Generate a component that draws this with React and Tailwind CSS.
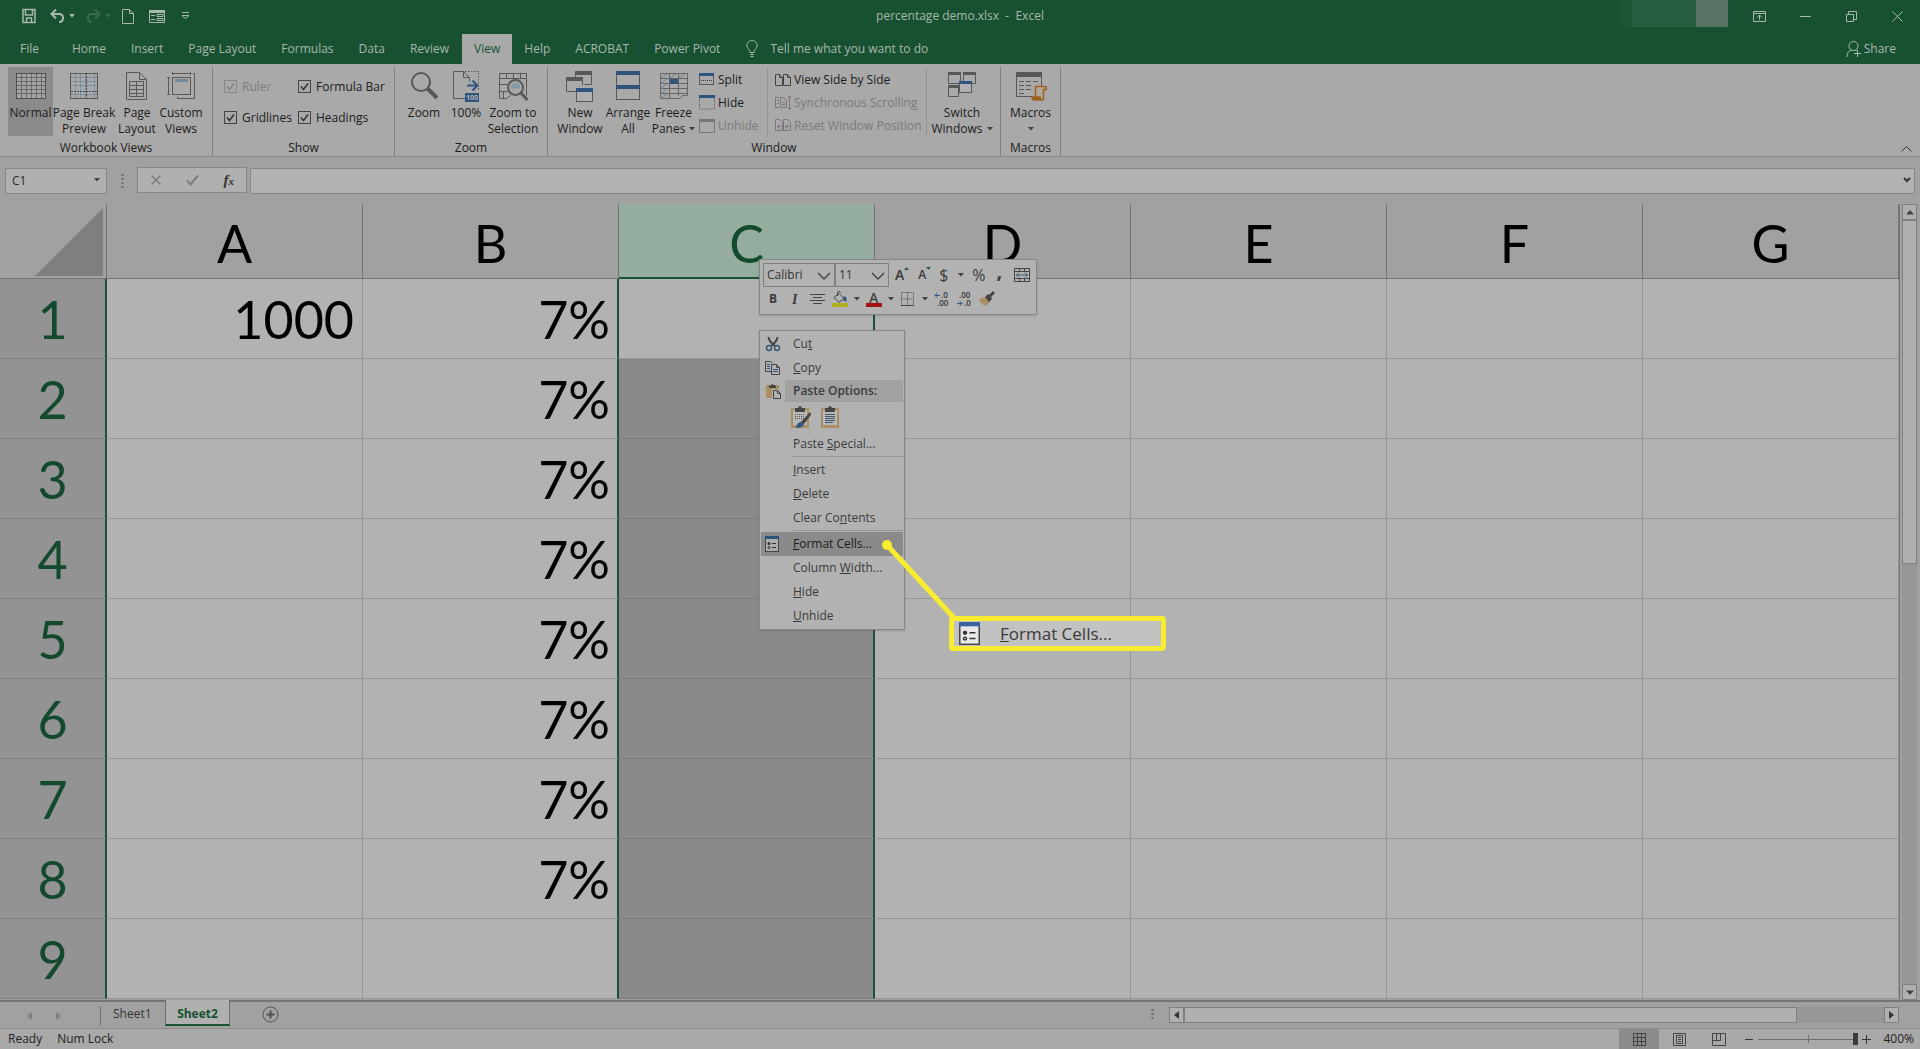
// src/App.jsx

import React from 'react';

const COLUMNS = ['A', 'B', 'C', 'D', 'E', 'F', 'G'];

const ROWS = [
  { A: '1000', B: '7%' },
  { B: '7%' },
  { B: '7%' },
  { B: '7%' },
  { B: '7%' },
  { B: '7%' },
  { B: '7%' },
  { B: '7%' },
  {},
];

const TABS = ['Home', 'Insert', 'Page Layout', 'Formulas', 'Data', 'Review', 'View', 'Help', 'ACROBAT', 'Power Pivot'];

const G = '#585858';
const BLUE = '#2f557f';

function Svg({ w, h, className = '', children }) {
  return (
    <svg width={w} height={h} viewBox={`0 0 ${w} ${h}`} fill="none" className={`shrink-0 overflow-visible ${className}`} aria-hidden="true">
      {children}
    </svg>
  );
}

function Caret({ className = 'text-[#404040]' }) {
  return (
    <Svg w={6} h={4} className={className}>
      <path d="M0 0h6L3 3.5z" fill="currentColor" />
    </Svg>
  );
}

/* ---------- Ribbon icons ---------- */

const NormalIcon = () => (
  <Svg w={32} h={32}>
    <rect x="1.5" y="3.5" width="29" height="25" fill="#a4a4a4" />
    <path d="M2 7.5h28M2 11.5h28M2 15.5h28M2 19.5h28M2 23.5h28M6.5 4v24M11.5 4v24M16.5 4v24M21.5 4v24M26.5 4v24" stroke="#686868" />
    <rect x="1.5" y="3.5" width="29" height="25" stroke="#505050" />
  </Svg>
);

const PageBreakIcon = () => (
  <Svg w={32} h={32}>
    <path d="M3 7.5h27M3 11.5h27M3 15.5h27M3 24.5h27M7.5 3v25M12.5 3v25M17.5 3v25M26.5 3v25" stroke="#7b909c" />
    <rect x="2.5" y="3.5" width="27" height="25" stroke={G} />
    <path d="M3 21.5h27M18.5 3v25" stroke="#3d4b56" strokeDasharray="2 1" />
  </Svg>
);

const PageLayoutIcon = () => (
  <Svg w={32} h={32}>
    <path d="M5.5 2.5h13l7 7v20h-20z" stroke={G} />
    <path d="M18.5 2.5v7h7" stroke={G} />
    <path d="M8.5 11.5h14v15h-14zM8.5 15.5h14M8.5 19.5h14M8.5 23.5h14M15.5 11.5v15" stroke={G} />
  </Svg>
);

const CustomViewsIcon = () => (
  <Svg w={32} h={32}>
    <rect x="7.5" y="7.5" width="18" height="17" stroke={G} />
    <rect x="10" y="9" width="13" height="3" fill="#71879a" />
    <path d="M7 3.5h19M7.5 2v3M25.5 2v3M3.500 7v18M2 7.5h3M2 24.5h3M28 3.5h1.500v25h-17v-2" stroke={G} />
  </Svg>
);

const ZoomIcon = () => (
  <Svg w={32} h={32}>
    <circle cx="13" cy="12" r="9" stroke={G} strokeWidth="2" />
    <path d="M19.500 18.500L29 28" stroke={G} strokeWidth="4" />
  </Svg>
);

const HundredIcon = () => (
  <Svg w={32} h={32}>
    <path d="M15 28.500H3.500v-27h10l6 6v4" stroke={G} />
    <path d="M13.500 1.500v6h6" stroke={G} />
    <path d="M15 1.500h13.500v19" stroke={G} strokeDasharray="1.500 1.500" />
    <path d="M17 15.500h10M22.500 10.500l5 5-5 5" stroke={BLUE} strokeWidth="2" />
    <rect x="15" y="23" width="14" height="9" fill={BLUE} />
    <text x="16" y="30" fontSize="7" fontWeight="700" fill="#b2b2b2" fontFamily="Open Sans, sans-serif">100</text>
  </Svg>
);

const ZoomSelectionIcon = () => (
  <Svg w={32} h={32}>
    <path d="M2.500 28V3.500h27v22M2.500 8.500h27M2.500 14.500h9M2.500 21.500h8M9.500 3.500v5M16.500 3.500v5M23.500 3.500v5M6.500 22v6M2.500 28.500h7l4-3" stroke={G} />
    <circle cx="18.500" cy="17.500" r="7.500" fill="#a9a9a9" stroke={G} strokeWidth="2" />
    <path d="M14 15.500a5 5 0 0 1 9 0v3h-9z" fill="#8299a8" />
    <path d="M24 23l6.500 7" stroke={G} strokeWidth="3" />
  </Svg>
);

const NewWindowIcon = () => (
  <Svg w={32} h={32}>
    <path d="M11.500 7V1.500h16v13h-7" stroke={G} />
    <rect x="11" y="1" width="17" height="4" fill={G} />
    <path d="M2.500 8.500h16v7M12 21.500H2.500v-13" stroke={G} />
    <rect x="2" y="7" width="17" height="4" fill={G} />
    <rect x="12.500" y="18.500" width="16" height="13" fill="#b0b0b0" stroke={G} />
    <rect x="12" y="18" width="17" height="4" fill={BLUE} />
  </Svg>
);

const ArrangeIcon = () => (
  <Svg w={32} h={32}>
    <rect x="4.500" y="2.500" width="23" height="27" stroke={G} />
    <rect x="4" y="1" width="24" height="4" fill={BLUE} />
    <rect x="4" y="15" width="24" height="4" fill={BLUE} />
  </Svg>
);

const FreezeIcon = () => (
  <Svg w={32} h={32}>
    <path d="M2.500 28V3.500h27v22h-5l-3 3h-19M2.500 8.500h27M2.500 13.500h27M2.500 18.500h27M2.500 23.500h27M11.500 3.500v25M20.500 3.500v22" stroke="#666" />
    <path d="M3 8l6-4M12 8l6-4M21 8l6-4M3 13l6-4M3 18l6-4M3 23l6-4M3 28l6-4" stroke="#6f8494" />
    <rect x="12" y="9" width="8" height="5" fill={BLUE} />
  </Svg>
);

const SwitchIcon = () => (
  <Svg w={32} h={32}>
    <path d="M2.500 2.500h12v11h-12zM17.500 2.500h12v11h-12zM2.500 15.500h10v11h-10z" stroke={G} />
    <path d="M2 2h13v3H2zM17 2h13v3H17zM2 15h11v3H2z" fill={G} />
    <rect x="13.500" y="11.500" width="12" height="11" fill="#b0b0b0" stroke={G} />
    <rect x="13" y="11" width="13" height="3" fill={BLUE} />
  </Svg>
);

const MacrosIcon = () => (
  <Svg w={32} h={32}>
    <path d="M17 26.500H1.500v-24h25v13" stroke={G} />
    <rect x="1" y="2" width="26" height="5" fill={G} />
    <path d="M4 11.500h5M11 11.500h5M18 11.500h5M4 15.500h5M11 15.500h5M4 19.500h5M11 19.500h5M4 23.500h5" stroke={G} />
    <path d="M20.500 27V16.500h9.500q1.500 0 1.500 3H28.500V28q0 2-2 2H19q-2 0-2-3h8q0 3 2 3" fill="#b0a898" stroke="#9a6020" strokeWidth="1.500" />
    <path d="M17 27h8v3h-7z" fill="#9a6020" />
  </Svg>
);

const SplitIcon = () => (
  <Svg w={16} h={13}>
    <rect x=".5" y=".5" width="14" height="11" stroke={G} />
    <rect width="15" height="3" fill={BLUE} />
    <path d="M2 7.500h12" stroke="#333" strokeDasharray="1 1" />
  </Svg>
);

const HideIcon = () => (
  <Svg w={16} h={15}>
    <path d="M.5 3v11h15V3" stroke={G} strokeDasharray="1 1" />
    <rect width="16" height="3" fill={BLUE} />
  </Svg>
);

const UnhideIcon = () => (
  <Svg w={16} h={14}>
    <rect x=".5" y=".5" width="15" height="13" stroke="#777" />
    <rect width="16" height="3" fill="#777" />
  </Svg>
);

const SideBySideIcon = () => (
  <Svg w={16} h={14}>
    <path d="M.5 1.500h4l3 3v8h-7zM8.500 1.500h4l3 3v8h-7zM4.500 1.500v3h3M12.500 1.500v3h3" stroke="#444" />
  </Svg>
);

const SyncIcon = () => (
  <Svg w={16} h={15}>
    <path d="M4 2.500H.5v10H4M5.500 2.500h3l3 3v7h-6zM2 5.500h2M2 8.500h2M7 7.500h3M7 9.500h3M14.500 1v13M13 2.500l1.500-2 1.500 2M13 12.500l1.500 2 1.500-2" stroke="#7d727d" />
  </Svg>
);

const ResetIcon = () => (
  <Svg w={16} h={13}>
    <path d="M.5.5h4l3 3v8h-7zM8.500.5h4l3 3v8h-7zM2 7.500h4M4 5.500v4M10 7.500h4M12 5.500v4" stroke="#7d727d" />
  </Svg>
);

/* ---------- Menu icons ---------- */

const CutIcon = () => (
  <Svg w={16} h={16}>
    <path d="M3.500 1q0 4 6.500 9M12.500 1q0 4-6.500 9" stroke="#444" strokeWidth="2" />
    <circle cx="4" cy="12" r="2.500" stroke="#3b5a6f" strokeWidth="1.500" />
    <circle cx="12" cy="12" r="2.500" stroke="#3b5a6f" strokeWidth="1.500" />
  </Svg>
);

const CopyIcon = () => (
  <Svg w={16} h={16}>
    <path d="M6 11.500H.5v-10h5l2 2" stroke="#444" />
    <path d="M2 4.500h3M2 6.500h3M2 8.500h3" stroke={BLUE} />
    <path d="M6.500 4.500h5l3 3v7h-8zM11.500 4.500v3h3" fill="#b2b2b2" stroke="#444" />
    <path d="M8 9.500h5M8 11.500h5" stroke={BLUE} />
  </Svg>
);

const PasteIcon = () => (
  <Svg w={16} h={16}>
    <path d="M1 2h13v4H7v9H1z" fill="#a98f62" />
    <path d="M4 2.500h2q1-3 3 0h2V5H4z" fill="#444" />
    <path d="M8.500 7.500h4l3 3v5h-7zM12.500 7.500v3h3" fill="#b2b2b2" stroke="#444" />
  </Svg>
);

function Clipboard({ brush }) {
  return (
    <Svg w={22} h={24}>
      <rect x="2" y="3" width="18" height="20" fill="#a98f62" />
      <rect x="4" y="5" width="14" height="15" fill="#b8b8b8" />
      <path d="M6 3h3q2-4 4 0h3v4H6z" fill="#444" />
      {brush ? (
        <>
          <path d="M6 9.500h10M6 11.500h10M6 13.500h9" stroke="#555" strokeDasharray="1 1" />
          <path d="M12 17l9-10q2 2 0 4l-6 8z" fill="#444" />
          <path d="M7 23q1-6 5-6l3 2q-1 4-8 4z" fill={BLUE} />
        </>
      ) : (
        <path d="M6 9.500h10M6 11.500h10M6 13.500h10M6 15.500h10M6 17.500h8" stroke="#3f5468" />
      )}
    </Svg>
  );
}

function FormatCellsIcon({ size = 16, light }) {
  return (
    <svg width={size - 2} height={size} viewBox="0 0 14 16" preserveAspectRatio="none" fill="none" aria-hidden="true">
      <rect x=".5" y=".5" width="13" height="15" fill={light ? '#e8e8e8' : '#adadad'} stroke="#454545" />
      <rect width="14" height="3" fill={light ? '#3a62a0' : BLUE} />
      <path d="M7 7.500h4M7 11.500h4" stroke="#333" />
      <circle cx="4" cy="7.500" r="1.500" fill="#333" />
      <circle cx="4" cy="11.500" r="1" stroke="#333" />
    </svg>
  );
}

/* ---------- Title bar and tabs ---------- */

function TitleBar() {
  return (
    <header className="relative flex h-8 items-center justify-center bg-[#175131] text-[#a9b8ae]">
      <div className="absolute left-[22px] top-2 flex h-4 items-center">
        <button aria-label="Save">
          <Svg w={14} h={16}>
            <path d="M1 1.500h12v13H1zM3.500 2v5h7V2M4.500 14v-4h5v4" stroke="currentColor" strokeWidth="1.500" />
          </Svg>
        </button>
        <button aria-label="Undo" className="ml-3.5 flex items-center gap-1">
          <Svg w={15} h={16}>
            <path d="M1 6h8q4 0 4 4t-4 4M6 1.500L1.500 6 6 10.500" stroke="currentColor" strokeWidth="2" />
          </Svg>
          <Caret className="text-[#a9b8ae]" />
        </button>
        <button aria-label="Redo" disabled className="ml-[11px] flex items-center gap-1 text-[#3c6a50]">
          <Svg w={15} h={16}>
            <path d="M14 6H6q-4 0-4 4t4 4M9 1.500L13.500 6 9 10.500" stroke="currentColor" strokeWidth="2" />
          </Svg>
          <Caret className="text-[#3c6a50]" />
        </button>
        <button aria-label="New" className="ml-[11px]">
          <Svg w={12} h={16}>
            <path d="M.5 1.500h7l4 4v10H.5zM7.500 1.500v4h4" stroke="currentColor" />
          </Svg>
        </button>
        <button aria-label="Form" className="ml-[15px]">
          <Svg w={16} h={16}>
            <path d="M.5 2.500h15v12H.5z" stroke="currentColor" />
            <path d="M0 2h16v3H0z" fill="currentColor" />
            <path d="M2 7.500h4M2 11.500h4M8 6.500h6v2H8zM8 10.500h6v2H8z" stroke="currentColor" />
          </Svg>
        </button>
        <button aria-label="Customize Quick Access Toolbar" className="ml-4">
          <Svg w={9} h={10}>
            <path d="M1 1.500h7M1 4.500h7l-3.500 3z" stroke="currentColor" />
          </Svg>
        </button>
      </div>
      <h1 className="whitespace-pre text-[12px] leading-4">percentage demo.xlsx  -  Excel</h1>
      <div className="absolute right-0 top-0 flex h-8">
        <div className="mr-2 flex h-[27px]">
          <div className="w-3 bg-[#1d5536]" />
          <div className="w-16 bg-[#265c3f]" />
          <div className="w-8 bg-[#587264]" />
        </div>
        <button aria-label="Ribbon Display Options" className="flex w-[46px] items-center justify-center">
          <Svg w={13} h={11}>
            <path d="M.5.5h12v10H.5zM.5 2.500h12M6.500 9V4M4 6.500L6.500 4 9 6.500" stroke="currentColor" />
          </Svg>
        </button>
        <button aria-label="Minimize" className="flex w-[46px] items-center justify-center">
          <Svg w={11} h={11}><path d="M0 5.500h11" stroke="currentColor" /></Svg>
        </button>
        <button aria-label="Restore" className="flex w-[46px] items-center justify-center">
          <Svg w={11} h={11}><path d="M.5 3.500h7v7h-7zM2.500 3V.5h8v8H8" stroke="currentColor" /></Svg>
        </button>
        <button aria-label="Close" className="flex w-[46px] items-center justify-center">
          <Svg w={11} h={11}><path d="M.5.5l10 10M10.500.5l-10 10" stroke="currentColor" /></Svg>
        </button>
      </div>
    </header>
  );
}

function TabBar() {
  return (
    <nav className="flex h-8 items-stretch bg-[#175131] pt-0.5 text-[12px] text-[#a9b8ae]">
      <button className="mr-2 pl-5 pr-[13px]">File</button>
      {TABS.map((tab) => (
        <button
          key={tab}
          className={tab === 'View' ? 'bg-[#a9a9a9] px-3 text-[#175131]' : 'pl-3 pr-[13px]'}
        >
          {tab}
        </button>
      ))}
      <button className="ml-[13px] flex items-center gap-3">
        <Svg w={12} h={18}>
          <path d="M4 12.500Q4 10 2 8.500A5 5 0 1 1 10 8.500Q8 10 8 12.500zM4 14.500h4M4.500 16.500h3" stroke="currentColor" />
        </Svg>
        Tell me what you want to do
      </button>
      <button className="ml-auto mr-6 flex items-center gap-[3px]">
        <Svg w={15} h={18}>
          <circle cx="7.500" cy="6" r="4.500" stroke="currentColor" />
          <path d="M1 17q0-6 4.500-7M9.500 10l1 1M8 13.500h7M11.500 10v7" stroke="currentColor" />
        </Svg>
        Share
      </button>
    </nav>
  );
}

/* ---------- Ribbon ---------- */

function BigButton({ icon, lines, caret, className = '' }) {
  return (
    <button className={`flex h-[69px] shrink-0 flex-col items-center pt-[3px] ${className}`}>
      {icon}
      {lines.map((line, i) => (
        <span key={line} className="flex items-center gap-1 whitespace-nowrap leading-4 first-of-type:mt-[3px]">
          {line}
          {caret && i === lines.length - 1 && line !== 'Macros' && <Caret />}
        </span>
      ))}
      {caret && lines.length === 1 && <Caret className="mt-1.5 text-[#404040]" />}
    </button>
  );
}

function SmallButton({ icon, label, disabled }) {
  return (
    <button disabled={disabled} className="flex h-[23px] shrink-0 items-center gap-[3px] whitespace-nowrap disabled:text-[#7a7a7a]">
      {icon}
      {label}
    </button>
  );
}

function Check({ label, disabled }) {
  return (
    <label className={`relative flex h-[31px] items-center gap-[5px] whitespace-nowrap ${disabled ? 'text-[#7d7d7d]' : ''}`}>
      <input
        type="checkbox"
        defaultChecked
        disabled={disabled}
        className="size-[13px] appearance-none border border-[#444] disabled:border-[#888]"
      />
      <Svg w={13} h={13} className="pointer-events-none absolute left-0">
        <path d="M3 6.500l2.500 3L10 3.500" stroke={disabled ? '#808080' : '#333'} strokeWidth="1.500" />
      </Svg>
      {label}
    </label>
  );
}

function Group({ name, className = '', children }) {
  return (
    <section className={`flex flex-col border-r border-[#808080] ${className}`}>
      <div className="flex h-[73px]">{children}</div>
      <h2 className="text-center leading-4">{name}</h2>
    </section>
  );
}

function Ribbon() {
  return (
    <div className="relative flex h-[93px] border-b border-[#8c8c8c] bg-[#a9a9a9] pt-[3px] text-[12px] text-[#1c1c1c]">
      <Group name="Workbook Views" className="w-[213px] px-2">
        <BigButton className="w-[45px] bg-[#8b8b8b]" icon={<NormalIcon />} lines={['Normal']} />
        <BigButton className="w-[62px]" icon={<PageBreakIcon />} lines={['Page Break', 'Preview']} />
        <BigButton className="w-11" icon={<PageLayoutIcon />} lines={['Page', 'Layout']} />
        <BigButton className="w-11" icon={<CustomViewsIcon />} lines={['Custom', 'Views']} />
      </Group>
      <Group name="Show" className="w-[182px]">
        <div className="grid grid-cols-[74px_auto] content-start pl-[11px] pt-1">
          <Check label="Ruler" disabled />
          <Check label="Formula Bar" />
          <Check label="Gridlines" />
          <Check label="Headings" />
        </div>
      </Group>
      <Group name="Zoom" className="w-[153px] px-1.5">
        <BigButton className="w-[46px]" icon={<ZoomIcon />} lines={['Zoom']} />
        <BigButton className="w-[38px]" icon={<HundredIcon />} lines={['100%']} />
        <BigButton className="w-14" icon={<ZoomSelectionIcon />} lines={['Zoom to', 'Selection']} />
      </Group>
      <Group name="Window" className="w-[453px] px-2">
        <BigButton className="w-12" icon={<NewWindowIcon />} lines={['New', 'Window']} />
        <BigButton className="w-12" icon={<ArrangeIcon />} lines={['Arrange', 'All']} />
        <BigButton className="w-[43px]" icon={<FreezeIcon />} lines={['Freeze', 'Panes']} caret />
        <div className="mt-px flex h-[69px] w-[73px] shrink-0 flex-col border-r border-[#949494] pl-1">
          <SmallButton icon={<SplitIcon />} label="Split" />
          <SmallButton icon={<HideIcon />} label="Hide" />
          <SmallButton icon={<UnhideIcon />} label="Unhide" disabled />
        </div>
        <div className="mt-px flex h-[69px] w-[159px] shrink-0 flex-col border-r border-[#949494] pl-[7px]">
          <SmallButton icon={<SideBySideIcon />} label="View Side by Side" />
          <SmallButton icon={<SyncIcon />} label="Synchronous Scrolling" disabled />
          <SmallButton icon={<ResetIcon />} label="Reset Window Position" disabled />
        </div>
        <BigButton className="w-[70px]" icon={<SwitchIcon />} lines={['Switch', 'Windows']} caret />
      </Group>
      <Group name="Macros" className="w-[60px]">
        <BigButton className="w-full" icon={<MacrosIcon />} lines={['Macros']} caret />
      </Group>
      <button aria-label="Collapse the Ribbon" className="mb-1 ml-auto mr-2 self-end">
        <Svg w={11} h={6}><path d="M.5 5.500l5-5 5 5" stroke="#333" /></Svg>
      </button>
    </div>
  );
}

function FormulaBar() {
  return (
    <div className="flex h-[47px] items-start bg-[#a1a1a1] pl-[5px] pr-[5px] pt-[10px]">
      <div className="relative">
        <input
          aria-label="Name Box"
          defaultValue="C1"
          className="h-[26px] w-[102px] border border-[#888] bg-[#b0b0b0] pl-1.5 text-[12px] text-[#2b2b2b]"
        />
        <Caret className="absolute right-[7px] top-[11px] text-[#404040]" />
      </div>
      <Svg w={3} h={26} className="ml-[14px]">
        <path d="M1.500 7v14" stroke="#6c6c6c" strokeWidth="2" strokeDasharray="2 2" />
      </Svg>
      <div className="ml-[13px] flex h-[26px] w-[110px] items-center justify-around border border-[#888] bg-[#b0b0b0]">
        <button aria-label="Cancel">
          <Svg w={12} h={12}><path d="M1.500 1.500l9 9M10.500 1.500l-9 9" stroke="#7b7b7b" strokeWidth="1.500" /></Svg>
        </button>
        <button aria-label="Enter">
          <Svg w={13} h={12}><path d="M1 6.500l3.500 4L12 1.500" stroke="#7b7b7b" strokeWidth="2" /></Svg>
        </button>
        <button className="font-['Liberation_Serif',serif] text-[15px] font-bold italic leading-4 text-[#333]">
          f<span className="text-[11px]">x</span>
        </button>
      </div>
      <div className="relative ml-[3px] flex-1">
        <input aria-label="Formula" className="h-[26px] w-full border border-[#888] bg-[#b2b2b2] px-2 text-[12px]" />
        <Svg w={8} h={6} className="absolute right-1 top-[10px]">
          <path d="M1 1l3 3 3-3" stroke="#333" strokeWidth="2" />
        </Svg>
      </div>
    </div>
  );
}

/* ---------- Sheet ---------- */

function cellClass(col, rowIndex) {
  const base = 'h-20 border-b border-r p-0 pr-2 text-right align-middle';
  if (col === 'C') {
    return rowIndex === 0
      ? `${base} border-b-[#959595] border-r-2 border-r-[#1a5434] bg-[#b2b2b2]`
      : `${base} border-b-[#7c7c7c] border-r-2 border-r-[#1a5434] bg-[#8a8a8a]`;
  }
  if (col === 'B') return `${base} border-b-[#959595] border-r-2 border-r-[#1a5434] pr-[7px]`;
  return `${base} border-[#959595]`;
}

function Sheet() {
  return (
    <table className="w-full table-fixed border-separate border-spacing-0 bg-[#b2b2b2] font-['Lato',sans-serif] text-[52px] leading-none text-black">
      <thead>
        <tr>
          <th className="h-[75px] w-[107px] border-b border-r border-[#757575] bg-[#a1a1a1] p-0">
            <Svg w={106} h={73}>
              <path d="M35 71L103 3v68z" fill="#7f7f7f" />
            </Svg>
          </th>
          {COLUMNS.map((col) => (
            <th
              key={col}
              scope="col"
              className={
                col === 'C'
                  ? 'border-b-2 border-r border-b-[#1a5434] border-r-[#757575] bg-[#94ad9f] p-0 pt-1 font-normal text-[#134a2d]'
                  : 'border-b border-r border-[#757575] bg-[#a1a1a1] p-0 pt-[3px] font-normal'
              }
            >
              {col}
            </th>
          ))}
        </tr>
      </thead>
      <tbody>
        {ROWS.map((row, i) => (
          <tr key={i}>
            <th scope="row" className="h-20 border-b border-r-2 border-b-[#7f7f7f] border-r-[#1a5434] bg-[#939393] p-0 pt-px font-normal text-[#134a2d]">
              {i + 1}
            </th>
            {COLUMNS.map((col) => (
              <td key={col} className={cellClass(col, i)}>
                {row[col]}
              </td>
            ))}
          </tr>
        ))}
      </tbody>
    </table>
  );
}

function VerticalScrollbar() {
  return (
    <div className="flex w-[21px] flex-col border-l border-[#757575] bg-[#a1a1a1] pl-0.5 pr-[3px]">
      <button aria-label="Scroll up" className="flex h-4 items-center justify-center border border-[#7f7f7f] bg-[#b0b0b0]">
        <Svg w={8} h={5}><path d="M0 4.500h8L4 0z" fill="#444" /></Svg>
      </button>
      <div className="flex-1 bg-[#979797]">
        <div className="h-[45%] border border-[#7f7f7f] bg-[#b0b0b0]" />
      </div>
      <button aria-label="Scroll down" className="flex h-4 items-center justify-center border border-[#7f7f7f] bg-[#b0b0b0]">
        <Svg w={8} h={5}><path d="M0 .5h8L4 5z" fill="#444" /></Svg>
      </button>
    </div>
  );
}

/* ---------- Floating toolbar, context menu, callout ---------- */

function FontSelect({ label, value, className }) {
  return (
    <div className={`relative border border-[#808080] ${className}`}>
      <select aria-label={label} className="block h-[22px] w-full appearance-none bg-transparent pl-[3px] text-[12px] leading-4 text-[#333]">
        <option>{value}</option>
      </select>
      <Svg w={14} h={8} className="pointer-events-none absolute right-[3px] top-2">
        <path d="M1 1l6 6 6-6" stroke="#444" strokeWidth="1.500" />
      </Svg>
    </div>
  );
}

function MiniToolbar() {
  return (
    <div className="absolute left-[759px] top-[55px] w-[278px] border border-[#868686] bg-[#b2b2b2] pl-[3px] pt-[3px] pb-[3px] text-[#3a3a3a] shadow-sm">
      <div className="flex h-6 items-center">
        <FontSelect label="Font" value="Calibri" className="w-[72px]" />
        <FontSelect label="Font Size" value="11" className="w-[54px]" />
        <button aria-label="Increase Font Size" className="ml-1.5 flex h-6 items-start">
          <span className="text-[14px] font-semibold leading-6">A</span>
          <Svg w={5} h={3} className="mt-1"><path d="M0 3h5L2.500 0z" fill="#2e5a4c" /></Svg>
        </button>
        <button aria-label="Decrease Font Size" className="ml-[9px] flex h-6 items-start">
          <span className="text-[12px] font-semibold leading-6">A</span>
          <Svg w={5} h={3} className="mt-1"><path d="M0 0h5L2.500 3z" fill="#2e5a4c" /></Svg>
        </button>
        <button aria-label="Accounting" className="ml-2 flex items-center gap-2.5 text-[16px]">
          $<Caret />
        </button>
        <button className="ml-2 text-[16px]">%</button>
        <button className="ml-[11px] pb-2 text-[20px] font-bold leading-4">,</button>
        <button aria-label="Merge and Center" className="ml-auto mr-[6px]">
          <Svg w={16} h={16}>
            <path d="M.5 1.500h15v13H.5zM.5 4.500h15M.5 11.500h15M5.500 1.500v3M10.500 1.500v3M5.500 11.500v3M10.500 11.500v3" stroke="#444" />
            <path d="M2 8h12M5 5.500L2.500 8 5 10.500M11 5.500L13.500 8 11 10.500" stroke="#3b5a6f" />
          </Svg>
        </button>
      </div>
      <div className="flex h-6 items-center">
        <button className="ml-1.5 text-[12px] font-bold">B</button>
        <button className="ml-[15px] font-['Liberation_Serif',serif] text-[14px] font-bold italic">I</button>
        <button aria-label="Center" className="ml-3">
          <Svg w={15} h={12}><path d="M0 1.500h15M3 4.500h9M0 7.500h15M3 10.500h9" stroke="#444" /></Svg>
        </button>
        <button aria-label="Fill Color" className="ml-[7px] flex items-center gap-1.5">
          <Svg w={16} h={16}>
            <path d="M2 6.500l5-4 5 5-5 4zM5.500 5V1q2-2 3 1" stroke="#444" />
            <path d="M12 5q4 1 2 6l-3-2z" fill={BLUE} />
            <rect y="12" width="16" height="4" fill="#b0b01c" />
          </Svg>
          <Caret />
        </button>
        <button aria-label="Font Color" className="ml-1.5 flex items-center gap-1.5">
          <Svg w={16} h={16}>
            <text x="3" y="12" fontSize="14" fontWeight="600" fill="#444" fontFamily="Open Sans, sans-serif">A</text>
            <rect y="12" width="16" height="4" fill="#a31212" />
          </Svg>
          <Caret />
        </button>
        <button aria-label="Borders" className="ml-[7px] flex items-center gap-2">
          <Svg w={13} h={14}>
            <path d="M.5.5h12v13H.5zM.5 7h12M6.500 .5v13" stroke="#444" strokeDasharray="1 1" />
            <path d="M0 13.500h13" stroke="#444" />
          </Svg>
          <Caret />
        </button>
        <button aria-label="Increase Decimal" className="ml-1.5">
          <Svg w={16} h={16}>
            <text x="7" y="7" fontSize="8" fontWeight="600" fill="#333" fontFamily="Open Sans, sans-serif">.0</text>
            <text x="3" y="15" fontSize="8" fontWeight="600" fill="#333" fontFamily="Open Sans, sans-serif">.00</text>
            <path d="M1 4.500h5M3.500 2L1 4.500 3.500 7" stroke={BLUE} />
          </Svg>
        </button>
        <button aria-label="Decrease Decimal" className="ml-1.5">
          <Svg w={16} h={16}>
            <text x="3" y="7" fontSize="8" fontWeight="600" fill="#333" fontFamily="Open Sans, sans-serif">.00</text>
            <text x="8" y="15" fontSize="8" fontWeight="600" fill="#333" fontFamily="Open Sans, sans-serif">.0</text>
            <path d="M1 12.500h5M3.500 10L6 12.500 3.500 15" stroke={BLUE} />
          </Svg>
        </button>
        <button aria-label="Format Painter" className="ml-1.5">
          <Svg w={17} h={16}>
            <path d="M1 8l6-2 5 5-4 4q-5-1-7-7z" fill="#a98f62" />
            <path d="M7 6l3-3 1 1 4-4 2 2-4 4 1 2-3 3z" fill="#444" />
          </Svg>
        </button>
      </div>
    </div>
  );
}

function MenuItem({ icon, active, children }) {
  return (
    <button
      role="menuitem"
      className={`flex h-6 w-full items-center whitespace-nowrap text-left ${active ? 'bg-[#8a8a8a] text-[#1c1c1c]' : ''}`}
    >
      <span className="flex w-8 shrink-0 pl-1">{icon}</span>
      <span>{children}</span>
    </button>
  );
}

function ContextMenu() {
  return (
    <div role="menu" className="absolute left-[759px] top-[126px] w-[146px] border border-[#868686] bg-[#b2b2b2] p-px text-[12px] text-[#3a3a3a] shadow-sm">
      <MenuItem icon={<CutIcon />}>Cu<u>t</u></MenuItem>
      <MenuItem icon={<CopyIcon />}><u>C</u>opy</MenuItem>
      <div className="flex h-[22px] items-center">
        <span className="w-6 shrink-0 pl-1"><PasteIcon /></span>
        <span className="flex h-[22px] flex-1 items-center whitespace-nowrap bg-[#a1a1a1] pl-2 font-semibold">Paste Options:</span>
      </div>
      <div className="flex h-[30px] items-center gap-2 pl-7">
        <button aria-label="Paste"><Clipboard brush /></button>
        <button aria-label="Values"><Clipboard /></button>
      </div>
      <MenuItem>Paste <u>S</u>pecial...</MenuItem>
      <hr className="ml-8 mb-px border-[#959595]" />
      <MenuItem><u>I</u>nsert</MenuItem>
      <MenuItem><u>D</u>elete</MenuItem>
      <MenuItem>Clear Co<u>n</u>tents</MenuItem>
      <hr className="ml-8 mb-px border-[#959595]" />
      <MenuItem active icon={<FormatCellsIcon />}><u>F</u>ormat Cells...</MenuItem>
      <MenuItem>Column <u>W</u>idth...</MenuItem>
      <MenuItem><u>H</u>ide</MenuItem>
      <MenuItem><u>U</u>nhide</MenuItem>
    </div>
  );
}

function Callout() {
  return (
    <>
      <Svg w={80} h={84} className="absolute left-[880px] top-[334px]">
        <path d="M7 7l68 74" stroke="#f7ec30" strokeWidth="5" />
        <circle cx="7" cy="7" r="5" fill="#f7ec30" />
      </Svg>
      <div className="absolute left-[949px] top-[412px] flex h-[35px] w-[217px] items-center rounded-sm border-[5px] border-[#f7ec30] bg-[#c2c2c2] pl-[5px] text-[17px] text-[#3a3a3a]">
        <FormatCellsIcon size={23} light />
        <span className="ml-5 whitespace-nowrap"><u>F</u>ormat Cells...</span>
      </div>
    </>
  );
}

/* ---------- Bottom bars ---------- */

function SheetTabs() {
  return (
    <div className="flex h-7 items-start border-t-2 border-[#757575] bg-[#a1a1a1] text-[12px] text-[#333]">
      <div className="mt-1 flex h-5 w-[101px] items-center border-r border-[#6c6c6c] pl-[27px] text-[#808080]">
        <button aria-label="Previous sheet"><Svg w={5} h={8}><path d="M5 0v8L0 4z" fill="currentColor" /></Svg></button>
        <button aria-label="Next sheet" className="ml-6"><Svg w={5} h={8}><path d="M0 0v8l5-4z" fill="currentColor" /></Svg></button>
      </div>
      <button className="h-6 w-16 pl-3 text-left">Sheet1</button>
      <button className="-mt-0.5 h-[26px] w-[65px] border-x border-b-2 border-x-[#6c6c6c] border-b-[#1a5434] bg-[#b0b0b0] pt-[3px] font-bold leading-4 text-[#175131]">Sheet2</button>
      <button aria-label="New sheet" className="ml-8 mt-1">
        <Svg w={17} h={17}>
          <circle cx="8.500" cy="8.500" r="7.500" stroke="#505050" />
          <path d="M4.500 8.500h8M8.500 4.500v8" stroke="#505050" strokeWidth="2" />
        </Svg>
      </button>
      <Svg w={3} h={26} className="ml-auto">
        <path d="M1.500 7v12" stroke="#6c6c6c" strokeWidth="2" strokeDasharray="2 2" />
      </Svg>
      <div className="ml-[15px] mr-[21px] mt-[5px] flex h-4 w-[38%] bg-[#979797]">
        <button aria-label="Scroll left" className="flex w-[15px] items-center justify-center border border-[#7f7f7f] bg-[#b0b0b0]">
          <Svg w={5} h={8}><path d="M5 0v8L0 4z" fill="#333" /></Svg>
        </button>
        <div className="flex-1">
          <div className="h-full w-7/8 border border-[#7f7f7f] bg-[#b0b0b0]" />
        </div>
        <button aria-label="Scroll right" className="flex w-[15px] items-center justify-center border border-[#7f7f7f] bg-[#b0b0b0]">
          <Svg w={5} h={8}><path d="M0 0v8l5-4z" fill="#333" /></Svg>
        </button>
      </div>
    </div>
  );
}

function StatusBar() {
  return (
    <footer className="flex h-[21px] items-center border-t border-[#8c8c8c] bg-[#a9a9a9] pl-2 text-[12px] leading-4 text-[#222]">
      <span>Ready</span>
      <span className="ml-[15px]">Num Lock</span>
      <button aria-label="Normal view" className="ml-auto flex h-5 w-10 items-center justify-center bg-[#8b8b8b]">
        <Svg w={13} h={13}><path d="M.5.5h12v12H.5zM.5 4.500h12M.5 8.500h12M4.500.5v12M8.500.5v12" stroke="#444" /></Svg>
      </button>
      <button aria-label="Page Layout view" className="flex w-10 justify-center">
        <Svg w={13} h={13}><path d="M.5.5h12v12H.5zM3.500 2.500h6v8h-6zM5 4.500h3M5 6.500h3M5 8.500h3" stroke="#444" /></Svg>
      </button>
      <button aria-label="Page Break Preview" className="flex w-10 justify-center">
        <Svg w={14} h={13}><path d="M.5.5h13v12H.5zM4.500.5v7M8.500.5v7M.5 7.500h8" stroke="#444" /></Svg>
      </button>
      <button aria-label="Zoom out" className="ml-1.5"><Svg w={9} h={9}><path d="M0 4.500h8" stroke="#333" /></Svg></button>
      <input
        type="range"
        aria-label="Zoom"
        min="10"
        max="400"
        defaultValue="400"
        className="ml-1 h-3 w-[100px] appearance-none bg-[linear-gradient(#707070,#707070),linear-gradient(#707070,#707070)] bg-[length:100%_1px,1px_8px] bg-center bg-no-repeat [&::-webkit-slider-thumb]:h-3 [&::-webkit-slider-thumb]:w-[5px] [&::-webkit-slider-thumb]:appearance-none [&::-webkit-slider-thumb]:bg-[#3a3a3a]"
      />
      <button aria-label="Zoom in" className="ml-1"><Svg w={9} h={9}><path d="M0 4.500h9M4.500 0v9" stroke="#333" /></Svg></button>
      <span className="ml-3 mr-1.5">400%</span>
    </footer>
  );
}

function App() {
  return (
    <div className="flex h-screen flex-col overflow-hidden bg-[#a1a1a1] font-['Open_Sans','Noto_Sans',sans-serif]">
      <TitleBar />
      <TabBar />
      <Ribbon />
      <FormulaBar />
      <main className="relative flex min-h-0 flex-1">
        <div className="min-w-0 flex-1 overflow-hidden">
          <Sheet />
        </div>
        <VerticalScrollbar />
        <MiniToolbar />
        <ContextMenu />
        <Callout />
      </main>
      <SheetTabs />
      <StatusBar />
    </div>
  );
}

export default App;
